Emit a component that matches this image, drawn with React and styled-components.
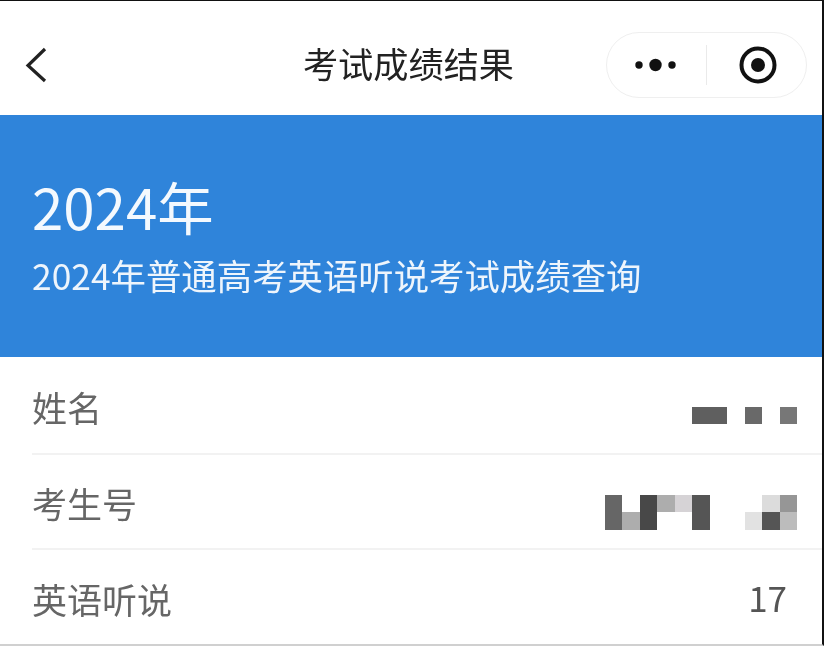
import React from "react";
import styled, { createGlobalStyle } from "styled-components";

const Global = createGlobalStyle`
  html, body { margin: 0; padding: 0; background: #fff; }
  body { font-family: "Noto Sans CJK SC", "Noto Sans", sans-serif; }
`;

const Frame = styled.div`
  width: 824px;
  height: 646px;
  box-sizing: border-box;
  border-top: 1px solid #111;
  border-right: 2px solid #111;
  border-bottom: 2px solid #d0d0d0;
  background: #fff;
  overflow: hidden;
  display: flex;
  flex-direction: column;
  filter: blur(0.6px);
`;

const NavBar = styled.header`
  height: 114px;
  flex: none;
  display: grid;
  grid-template-columns: 1fr auto 1fr;
  align-items: center;
  padding: 14px 15px 0 24px;
  box-sizing: border-box;
`;

const BackButton = styled.div`
  display: flex;
  align-items: center;
  color: #222;
`;

const NavTitle = styled.h1`
  margin: 0 0 4px;
  font-size: 35.2px;
  font-weight: 400;
  line-height: 1;
  color: #222;
  position: relative;
  left: -7px;
`;

const Capsule = styled.div`
  justify-self: end;
  width: 201px;
  height: 66px;
  box-sizing: border-box;
  border: 1.5px solid #efefef;
  border-radius: 33px;
  display: grid;
  grid-template-columns: 1fr 2px 1fr;
  align-items: center;
  justify-items: center;
`;

const CapsuleDivider = styled.span`
  width: 1.5px;
  height: 40px;
  background: #eaeaea;
`;

const Banner = styled.section`
  height: 242px;
  flex: none;
  background: #2f84da;
  color: #fff;
  padding: 58px 32px 0;
  box-sizing: border-box;
  display: flex;
  flex-direction: column;
  gap: 15px;
`;

const Year = styled.div`
  font-size: 56.4px;
  line-height: 66px;
  font-weight: 400;
  color: #f4f9fe;
`;

const Subtitle = styled.div`
  font-size: 35.4px;
  line-height: 42px;
  color: #eef5fc;
`;

const List = styled.ul`
  list-style: none;
  margin: 0;
  padding: 0 0 0 32px;
  flex: 1;
`;

const Row = styled.li`
  height: ${(p) => p.$h}px;
  box-sizing: border-box;
  display: flex;
  align-items: center;
  justify-content: space-between;
  border-bottom: ${(p) => (p.$last ? "none" : "2px solid #f2f2f2")};
  padding: 2px 25px 0 0;
`;

const Label = styled.span`
  font-size: 35px;
  line-height: 1;
  color: #666;
`;

const Score = styled.span`
  font-size: 35px;
  line-height: 1;
  color: #555;
  padding: 0 10px 4px 0;
`;

const Mosaic = styled.div`
  display: grid;
  grid-template-columns: repeat(${(p) => p.$cols}, 17.5px);
  grid-auto-rows: 17.5px;
  position: relative;
  top: 9.5px;
`;

const Cell = styled.i`
  display: block;
  background: ${(p) => p.$c || "transparent"};
`;

const nameCells = ["#5f5f5f", "#5f5f5f", "", "#696969", "", "#777"];
const idCells = [
  "#666", "", "#484848", "#adadad", "#d6d3d6", "#555", "", "", "", "#dcdcdc", "#969696",
  "#666", "#adadad", "#484848", "", "", "#555", "", "", "#e2e2e2", "#555", "#bcbcbc",
];

const renderCells = (cells) => cells.map((c, i) => <Cell key={i} $c={c} />);

export default function App() {
  return (
    <>
      <Global />
      <Frame>
        <NavBar>
          <BackButton>
            <svg width="26" height="38" viewBox="0 0 26 38" fill="none" stroke="currentColor" strokeWidth="3.2">
              <path d="M21 3 L4 19.5 L21 35" />
            </svg>
          </BackButton>
          <NavTitle>考试成绩结果</NavTitle>
          <Capsule>
            <svg width="44" height="16" viewBox="0 0 44 16" fill="#111">
              <circle cx="5" cy="8" r="3.7" />
              <circle cx="21.5" cy="8" r="6.2" />
              <circle cx="38" cy="8" r="3.7" />
            </svg>
            <CapsuleDivider />
            <svg width="40" height="40" viewBox="0 0 40 40">
              <circle cx="21" cy="20" r="16.5" fill="none" stroke="#111" strokeWidth="4" />
              <circle cx="21" cy="20" r="7" fill="#111" />
            </svg>
          </Capsule>
        </NavBar>
        <Banner>
          <Year>2024年</Year>
          <Subtitle>2024年普通高考英语听说考试成绩查询</Subtitle>
        </Banner>
        <List>
          <Row $h={98}>
            <Label>姓名</Label>
            <Mosaic $cols={6}>{renderCells(nameCells)}</Mosaic>
          </Row>
          <Row $h={95}>
            <Label>考生号</Label>
            <Mosaic $cols={11}>{renderCells(idCells)}</Mosaic>
          </Row>
          <Row $h={94} $last>
            <Label>英语听说</Label>
            <Score>17</Score>
          </Row>
        </List>
      </Frame>
    </>
  );
}
